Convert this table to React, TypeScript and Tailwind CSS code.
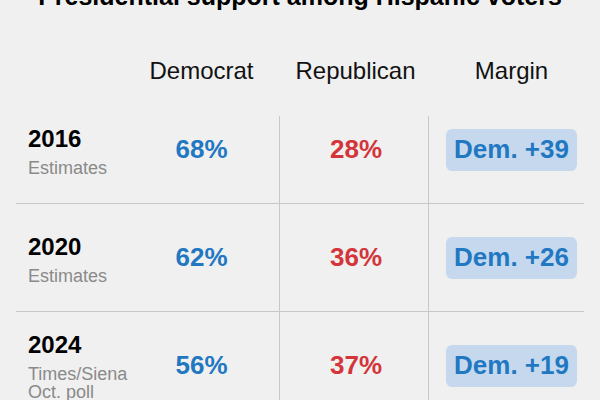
const rows = [
  { year: '2016', note: ['Estimates'], dem: '68%', rep: '28%', margin: 'Dem. +39' },
  { year: '2020', note: ['Estimates'], dem: '62%', rep: '36%', margin: 'Dem. +26' },
  { year: '2024', note: ['Times/Siena', 'Oct. poll'], dem: '56%', rep: '37%', margin: 'Dem. +19' },
]

export default function App() {
  return (
    <div className="w-[600px] h-[400px] overflow-hidden bg-[#f0f0f0] text-black font-['Liberation_Sans',Arial,sans-serif]">
      {/* Title (cut off at the top) */}
      <h1 className="mt-[-16px] text-center text-[25px] leading-[25px] font-bold">
        Presidential support among Hispanic voters
      </h1>

      <div className="mx-4 mt-[50px]">
        {/* Column headers */}
        <div className="grid grid-cols-[108px_155px_149px_156px] text-[24px] leading-[24px] text-[#121212]">
          <div />
          <div className="text-center">Democrat</div>
          <div className="text-center pl-[4px]">Republican</div>
          <div className="flex justify-end pr-[7px]">
            <div className="w-[131px] text-center">Margin</div>
          </div>
        </div>

        {/* Rows */}
        <div className="mt-[13px]">
          {rows.map((row, i) => (
            <div
              key={row.year}
              className="grid grid-cols-[108px_155px_149px_156px] h-[108px] border-b border-[#c8c8c8]"
            >
              <div className={`flex flex-col justify-center pl-3 ${i === 2 ? 'pt-[2px]' : 'pt-[5px]'}`}>
                <div className="text-[24px] leading-[24px] font-bold">{row.year}</div>
                <div className="mt-[8px] text-[18px] leading-[18px] text-[#8a8a8a]">
                  {row.note.map((n) => (
                    <div key={n}>{n}</div>
                  ))}
                </div>
              </div>
              <div className="flex items-center justify-center text-[26px] font-bold text-[#1f78c1]">
                {row.dem}
              </div>
              <div
                className={`flex items-center justify-center pl-[4px] border-l border-[#c8c8c8] text-[26px] font-bold text-[#d4353a] ${
                  i === 0 ? 'mt-[20px] pb-[20px]' : ''
                }`}
              >
                {row.rep}
              </div>
              <div
                className={`flex items-center justify-end pr-[7px] border-l border-[#c8c8c8] ${
                  i === 0 ? 'mt-[20px] pb-[20px]' : ''
                }`}
              >
                <div className="w-[131px] h-[42px] rounded-[6px] bg-[#c6d8ee] flex items-center justify-center text-[26px] font-bold text-[#1f78c1]">
                  {row.margin}
                </div>
              </div>
            </div>
          ))}
        </div>
      </div>
    </div>
  )
}
